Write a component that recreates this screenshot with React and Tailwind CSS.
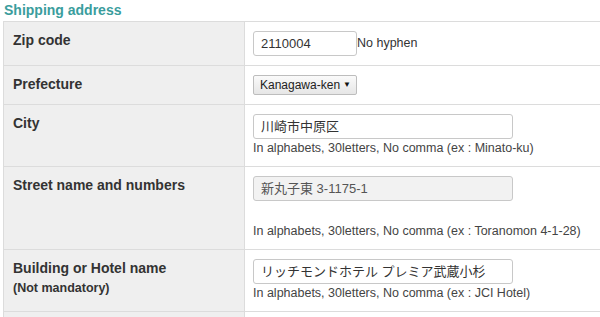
import React from "react";

const font = { fontFamily: '"Liberation Sans", Arial, "Noto Sans CJK JP", sans-serif' };

function Row({ label, sub, children }) {
  return (
    <div className="flex border-b border-[#dcdcdc]">
      <div className="w-[241px] shrink-0 bg-[#efefef] border-r border-[#dcdcdc] pl-[9px] pt-[9px] pb-[9px]">
        <div className="text-[14px] font-bold leading-[18px] text-[#333]">{label}</div>
        {sub && <div className="text-[12.5px] font-bold leading-[18px] mt-[2px] text-[#333]">{sub}</div>}
      </div>
      <div className="flex-1 bg-white pl-[8px] py-[9px]">{children}</div>
    </div>
  );
}

const inputCls =
  "h-[25px] border border-[#c8c8c8] rounded-[3px] px-[7px] text-[13px] leading-[23px] text-[#333] bg-white";
const helpCls = "text-[12.5px] leading-[18px] text-[#444]";

export default function App() {
  return (
    <div className="w-[600px] h-[317px] overflow-hidden bg-white" style={font}>
      <div className="h-[21px] pl-[4px] pt-[1px] text-[14px] font-bold leading-[18px] text-[#3a9d9d]">
        Shipping address
      </div>
      <div className="ml-[3px] w-[640px] border-t border-l border-[#dcdcdc]">
        <Row label="Zip code">
          <div className="flex items-center">
            <div className={inputCls + " w-[104px]"}>2110004</div>
            <span className="text-[12.5px] leading-[18px] text-[#333] -mt-[2px]">No hyphen</span>
          </div>
        </Row>
        <Row label="Prefecture">
          <div className="w-[104px] h-[20px] border border-[#bdbdbd] rounded-[2px] bg-gradient-to-b from-[#fafafa] to-[#e6e6e6] flex items-center pl-[6px] pr-[5px] justify-between">
            <span className="text-[12px] leading-[18px] text-[#222]">Kanagawa-ken</span>
            <span className="text-[8px] leading-[8px] text-[#111]">▼</span>
          </div>
        </Row>
        <Row label="City">
          <div className={inputCls + " w-[260px]"}>川崎市中原区</div>
          <div className={helpCls}>In alphabets, 30letters, No comma (ex : Minato-ku)</div>
        </Row>
        <Row label="Street name and numbers">
          <div className={inputCls + " w-[260px] !bg-[#f2f2f2] !text-[#555]"}>新丸子東 3-1175-1</div>
          <div className={helpCls + " mt-[21px]"}>
            In alphabets, 30letters, No comma (ex : Toranomon 4-1-28)
          </div>
        </Row>
        <Row label="Building or Hotel name" sub="(Not mandatory)">
          <div className={inputCls + " w-[260px]"}>リッチモンドホテル プレミア武蔵小杉</div>
          <div className={helpCls}>In alphabets, 30letters, No comma (ex : JCI Hotel)</div>
        </Row>
        <Row label=" ">
          <div className="h-[25px]" />
        </Row>
      </div>
    </div>
  );
}
